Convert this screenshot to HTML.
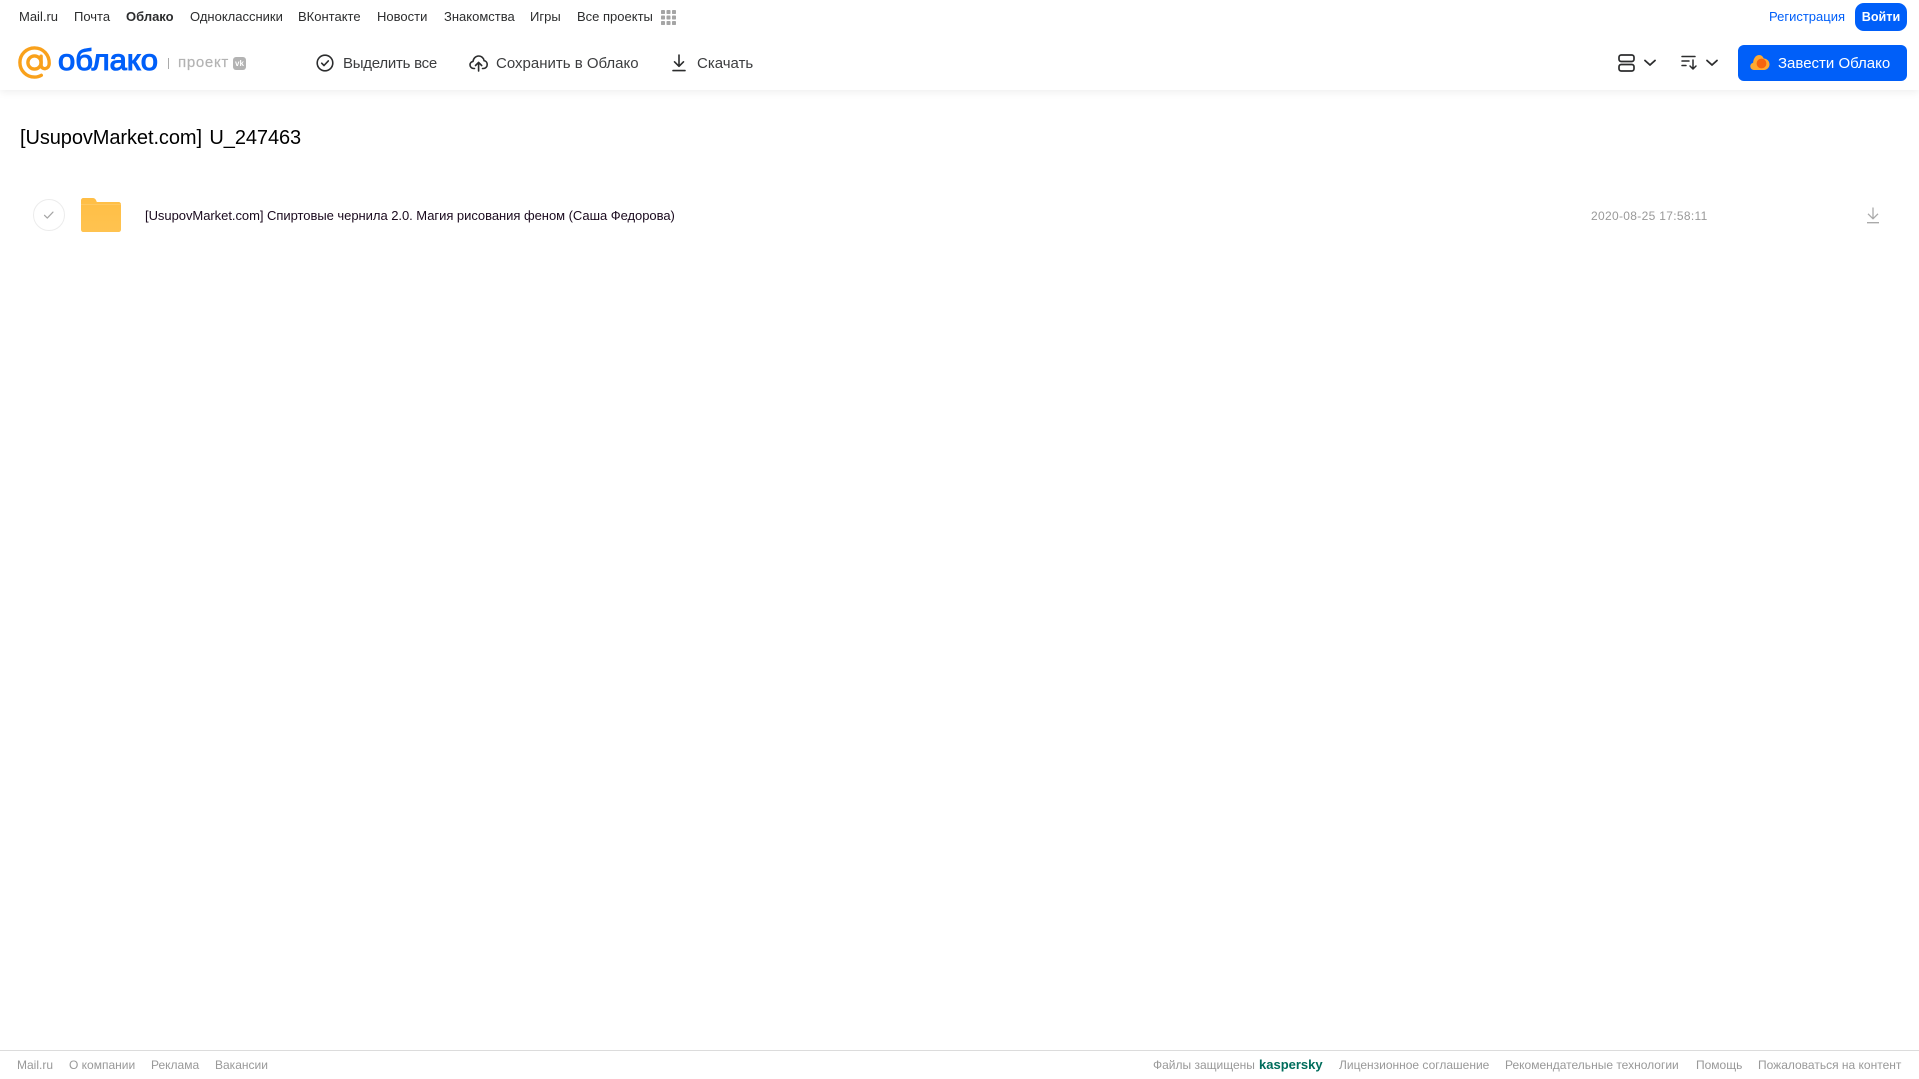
<!DOCTYPE html>
<html lang="ru"><head><meta charset="utf-8"><title>Облако</title>
<style>
html,body{margin:0;padding:0;background:#fff}
body{width:1919px;height:1079px;position:relative;overflow:hidden;font-family:"Liberation Sans",sans-serif;color:#2c2d2e}
.t{position:absolute;white-space:nowrap;line-height:16px}
.n{top:9px;font-size:13px;color:#2c2d2e}
.a{top:54px;font-size:15px;line-height:18px;color:#3c3d3f}
.f{top:1057px;font-size:12px;color:#999}
svg{position:absolute;overflow:visible}
</style></head><body>
<div style="position:absolute;left:0;top:0;width:1919px;height:90px;background:#fff;box-shadow:0 2px 8px rgba(0,0,0,.07)"></div>

<span class="t n" style="left:19px">Mail.ru</span>
<span class="t n" style="left:74px">Почта</span>
<span class="t n" style="left:126px;font-weight:bold">Облако</span>
<span class="t n" style="left:190px">Одноклассники</span>
<span class="t n" style="left:298px">ВКонтакте</span>
<span class="t n" style="left:377px">Новости</span>
<span class="t n" style="left:444px">Знакомства</span>
<span class="t n" style="left:530px">Игры</span>
<span class="t n" style="left:577px">Все проекты</span>
<svg style="left:661px;top:10px" width="15" height="15" fill="#a5a5a5"><rect x="0" y="0" width="4" height="4" rx=".8"/><rect x="5.500" y="0" width="4" height="4" rx=".8"/><rect x="11" y="0" width="4" height="4" rx=".8"/><rect x="0" y="5.500" width="4" height="4" rx=".8"/><rect x="5.500" y="5.500" width="4" height="4" rx=".8"/><rect x="11" y="5.500" width="4" height="4" rx=".8"/><rect x="0" y="11" width="4" height="4" rx=".8"/><rect x="5.500" y="11" width="4" height="4" rx=".8"/><rect x="11" y="11" width="4" height="4" rx=".8"/></svg>

<span class="t n" style="left:1769px;color:#005ff9">Регистрация</span>
<div class="t" style="left:1855px;top:3px;width:52px;height:28px;line-height:28px;background:#005ff9;border-radius:9px;color:#fff;font-size:12.600px;font-weight:bold;text-align:center">Войти</div>

<!-- logo -->
<svg style="left:18px;top:46px" width="34" height="34" viewBox="0 0 34 34" fill="none" stroke="#f9a11b" stroke-width="3.400"><circle cx="16.500" cy="16.500" r="6.600"/><path d="M23.100 10.200V19c0 5.200 7.900 5 8.100-1.500.3-8.400-6-15.600-14.700-15.600C8.300 1.900 1.900 8.400 1.900 16.500S8.300 31.100 16.500 31.100c2.600 0 4.800-.6 6.800-1.800" stroke-linecap="round"/></svg>
<svg style="left:56px;top:44px" width="110" height="36"><text x="2" y="26" font-family="'Liberation Sans',sans-serif" font-size="30" fill="#005ff9" stroke="#005ff9" stroke-width="1.100" textLength="100" lengthAdjust="spacingAndGlyphs">облако</text></svg>
<div style="position:absolute;left:168px;top:58px;width:1px;height:11px;background:#aaa"></div>
<span class="t" style="left:178px;top:54px;font-size:15px;line-height:18px;color:#b3b3b3;letter-spacing:.7px;-webkit-text-stroke:.2px #b3b3b3">проект</span>
<div style="position:absolute;left:233px;top:57px;width:13px;height:13px;border-radius:3px;background:#b3b3b3;color:#fff;font-size:8px;line-height:13px;text-align:center;font-weight:bold">vk</div>

<!-- actions -->
<svg style="left:316px;top:54px" width="18" height="18" viewBox="0 0 18 18" fill="none" stroke="#2c2d2e" stroke-width="1.600"><circle cx="9" cy="9" r="7.800"/><path d="M5.700 9.200l2.300 2.300 4.300-4.600" stroke-linecap="round" stroke-linejoin="round"/></svg>
<span class="t a" style="left:343px;top:55px;letter-spacing:-.25px">Выделить все</span>
<svg style="left:469px;top:54px" width="19" height="18" viewBox="0 0 19 18" fill="none" stroke="#2c2d2e" stroke-width="1.600" stroke-linecap="round" stroke-linejoin="round"><path d="M5.500 14.500H4.800C2.600 14.500 1 12.900 1 10.900c0-1.800 1.300-3.200 3-3.500C4.400 4.300 6.700 2 9.600 2c2.900 0 5.100 2 5.500 4.700 1.900.2 3.100 1.900 3.100 3.800 0 2.200-1.500 4-3.900 4h-.8"/><path d="M9.600 17V8.500M6.500 11.500l3.100-3.100 3.100 3.100"/></svg>
<span class="t a" style="left:496px;top:55px">Сохранить в Облако</span>
<svg style="left:671px;top:54px" width="16" height="18" viewBox="0 0 16 18" fill="none" stroke="#2c2d2e" stroke-width="1.600" stroke-linecap="round" stroke-linejoin="round"><path d="M8 1v11M3.500 7.800L8 12.300l4.500-4.500M2 16.600h12"/></svg>
<span class="t a" style="left:697px;top:55px">Скачать</span>

<!-- right icons -->
<svg style="left:1618px;top:54px" width="17" height="18" viewBox="0 0 17 18" fill="none" stroke="#2c2d2e" stroke-width="1.700"><rect x="1" y="1" width="15" height="6.500" rx="2.200"/><rect x="1" y="10.500" width="15" height="6.500" rx="2.200"/></svg>
<svg style="left:1644px;top:59px" width="12" height="8" fill="none" stroke="#2c2d2e" stroke-width="1.800" stroke-linecap="round" stroke-linejoin="round"><path d="M1 1.500l5 4.500 5-4.500"/></svg>
<svg style="left:1681px;top:55px" width="16" height="15" viewBox="0 0 16 15" fill="none" stroke="#2c2d2e" stroke-width="1.500" stroke-linecap="round" stroke-linejoin="round"><path d="M1 1.500h13M1 6h7M1 10.500h4M12 5v9M9 11l3 3 3-3"/></svg>
<svg style="left:1706px;top:59px" width="12" height="8" fill="none" stroke="#2c2d2e" stroke-width="1.800" stroke-linecap="round" stroke-linejoin="round"><path d="M1 1.500l5 4.500 5-4.500"/></svg>
<div style="position:absolute;left:1738px;top:45px;width:169px;height:36px;background:#005ff9;border-radius:6px"></div>
<svg style="left:1750px;top:54px" width="20" height="17" viewBox="0 0 20 17"><path d="M4 16C1.800 16 .3 14.300.3 12.300c0-1.800 1.200-3.200 2.800-3.600C3.300 5.300 5.400 1 9 1c2.700 0 4 1.700 4.700 3.500 3.300.1 5.800 2.800 5.800 5.800 0 3.200-2.400 5.700-5.500 5.700z" fill="#ffa930"/><circle cx="11.500" cy="9.500" r="4.900" fill="#f5640f"/></svg>
<span class="t a" style="left:1778px;top:55px;color:#fff">Завести Облако</span>

<span class="t" style="left:20px;top:126px;font-size:20px;line-height:24px;color:#000;word-spacing:2px;letter-spacing:-.08px">[UsupovMarket.com] U_247463</span>

<!-- row -->
<div style="position:absolute;left:33px;top:199px;width:30px;height:30px;border:1px solid #ececec;border-radius:50%"></div>
<svg style="left:43px;top:210px" width="12" height="10" fill="none" stroke="#a5a5a5" stroke-width="1.200" stroke-linecap="round" stroke-linejoin="round"><path d="M1.500 5.300l2.800 2.800 5.700-6"/></svg>
<svg style="left:81px;top:198px" width="40" height="34" viewBox="0 0 40 34"><defs><linearGradient id="g" x1="0" y1="0" x2="0" y2="1"><stop offset="0" stop-color="#ffbe45"/><stop offset="1" stop-color="#ffc350"/></linearGradient></defs><path d="M2.500 0h9c2 0 3 1 3.600 2.300L15.800 4H37.500c1.500 0 2.500 1 2.500 2.500v25c0 1.500-1 2.500-2.500 2.500h-35C1 34 0 33 0 31.500v-29C0 1 1 0 2.500 0z" fill="url(#g)"/><rect x="0" y="6" width="40" height="1" fill="#ffd27a" opacity=".5"/></svg>
<span class="t" style="left:145px;top:208px;font-size:13px;color:#1a0a1e;letter-spacing:-.04px">[UsupovMarket.com] Спиртовые чернила 2.0. Магия рисования феном (Саша Федорова)</span>
<span class="t" style="left:1591px;top:208px;font-size:12px;color:#999;letter-spacing:.32px">2020-08-25 17:58:11</span>
<svg style="left:1866px;top:207px" width="14" height="17" fill="none" stroke="#aaa" stroke-width="1.300" stroke-linejoin="round"><path d="M7 .5v11M2 6.800l5 5 5-5M1 15.700h12"/></svg>

<!-- footer -->
<div style="position:absolute;left:0;top:1050px;width:1919px;height:1px;background:#dcdcdc"></div>
<span class="t f" style="left:17px">Mail.ru</span>
<span class="t f" style="left:69px">О компании</span>
<span class="t f" style="left:151px">Реклама</span>
<span class="t f" style="left:215px">Вакансии</span>
<span class="t f" style="left:1153px">Файлы защищены</span>
<span class="t" style="left:1259px;top:1057px;font-size:13px;font-weight:bold;color:#006d5c">kaspersky</span>
<span class="t f" style="left:1339px">Лицензионное соглашение</span>
<span class="t f" style="left:1505px">Рекомендательные технологии</span>
<span class="t f" style="left:1696px">Помощь</span>
<span class="t f" style="left:1758px">Пожаловаться на контент</span>
</body></html>
